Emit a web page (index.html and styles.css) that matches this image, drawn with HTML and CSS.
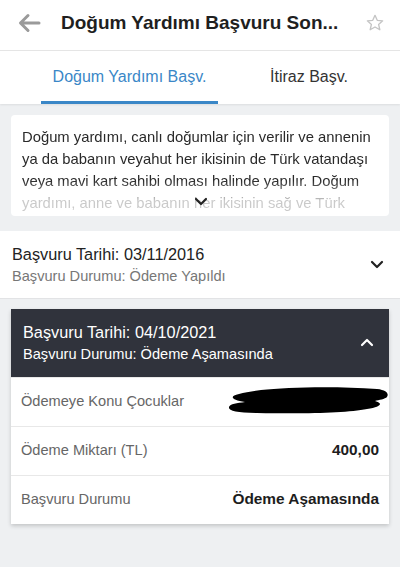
FILE: index.html
```html
<!DOCTYPE html>
<html lang="tr">
<head>
<meta charset="utf-8">
<link rel="stylesheet" href="styles.css">
</head>
<body>
<header class="topbar">
  <svg class="back" width="24" height="20" viewBox="0 0 24 20"><path d="M22 10H4M11 2.5L3.5 10L11 17.5" fill="none" stroke="#9a9a9a" stroke-width="3" stroke-linecap="round" stroke-linejoin="round"/></svg>
  <h1 class="title">Doğum Yardımı Başvuru Son...</h1>
  <svg class="star" width="20" height="20" viewBox="0 0 24 24"><path d="M12 2.8l2.7 6 6.5.6-4.9 4.3 1.5 6.4L12 16.8l-5.8 3.3 1.5-6.4-4.9-4.3 6.5-.6z" fill="none" stroke="#c4c4c4" stroke-width="1.6" stroke-linejoin="round"/></svg>
</header>
<nav class="tabs">
  <div class="tab active">Doğum Yardımı Başv.</div>
  <div class="tab">İtiraz Başv.</div>
</nav>
<main class="content">
  <section class="info">
    <p class="info-text">Doğum yardımı, canlı doğumlar için verilir ve annenin ya da babanın veyahut her ikisinin de Türk vatandaşı veya mavi kart sahibi olması halinde yapılır. Doğum yardımı, anne ve babanın her ikisinin sağ ve Türk</p>
    <svg class="more" width="14" height="9" viewBox="0 0 14 9"><path d="M2 2l5 5 5-5" fill="none" stroke="#222" stroke-width="2.2" stroke-linecap="round" stroke-linejoin="round"/></svg>
  </section>
  <section class="app">
    <div class="app-text">
      <div class="app-date">Başvuru Tarihi: 03/11/2016</div>
      <div class="app-status">Başvuru Durumu: Ödeme Yapıldı</div>
    </div>
    <svg width="14" height="9" viewBox="0 0 14 9"><path d="M2 2l5 5 5-5" fill="none" stroke="#222" stroke-width="2.2" stroke-linecap="round" stroke-linejoin="round"/></svg>
  </section>
  <section class="card">
    <div class="card-head">
      <div class="app-text">
        <div class="head-date">Başvuru Tarihi: 04/10/2021</div>
        <div class="head-status">Başvuru Durumu: Ödeme Aşamasında</div>
      </div>
      <svg width="14" height="9" viewBox="0 0 14 9"><path d="M2 7l5-5 5 5" fill="none" stroke="#fff" stroke-width="2.2" stroke-linecap="round" stroke-linejoin="round"/></svg>
    </div>
    <div class="row">
      <span class="label">Ödemeye Konu Çocuklar</span>
      <svg class="redact" width="162" height="30" viewBox="0 0 162 30"><path d="M34 4 C60 1 110 0 150 3 C160 4 162 8 160 11 C158 13 152 14 148 15 C156 17 155 21 140 23 C120 27 80 28 30 27 C10 27 1 25 2 21 C3 18 10 17 18 16 C4 14 2 10 12 8 C18 6 26 5 34 4Z" fill="#000"/></svg>
    </div>
    <div class="row">
      <span class="label">Ödeme Miktarı (TL)</span>
      <span class="value">400,00</span>
    </div>
    <div class="row">
      <span class="label">Başvuru Durumu</span>
      <span class="value">Ödeme Aşamasında</span>
    </div>
  </section>
</main>
</body>
</html>
```
FILE: styles.css
```css
* { box-sizing: border-box; }
html, body { margin: 0; padding: 0; }
body {
  width: 400px;
  height: 567px;
  overflow: hidden;
  background: #eef0f2;
  font-family: "Liberation Sans", Arial, sans-serif;
  color: #222;
}
.topbar {
  height: 51px;
  background: #fff;
  display: flex;
  align-items: center;
  padding: 0 15px 4px 17px;
  border-bottom: 1px solid #e6e6e6;
}
.back { flex: none; }
.title {
  flex: 1;
  margin: 0 0 0 20px;
  font-size: 19px;
  font-weight: bold;
  color: #1f1f1f;
  white-space: nowrap;
}
.star { flex: none; }
.tabs {
  height: 53px;
  background: #fff;
  display: flex;
  padding: 0 0 0 41px;
  box-shadow: 0 1px 2px rgba(0,0,0,0.08);
}
.tab {
  font-size: 16px;
  color: #333;
  display: flex;
  align-items: center;
  justify-content: center;
  padding-top: 1px;
}
.tab.active {
  width: 177px;
  color: #3a87c7;
  border-bottom: 3px solid #3a87c7;
}
.tab:not(.active) { flex: 1; padding-bottom: 3px; }
.content { padding-top: 11px; }
.info {
  margin: 0 11px;
  background: #fff;
  border-radius: 4px;
  height: 101px;
  padding: 11px 10px 0 11px;
  position: relative;
  overflow: hidden;
}
.info-text {
  margin: 0;
  font-size: 14.8px;
  line-height: 22px;
  color: #2a2a2a;
  -webkit-mask-image: linear-gradient(to bottom, #000 62%, rgba(0,0,0,0.25) 85%);
  mask-image: linear-gradient(to bottom, #000 62%, rgba(0,0,0,0.25) 85%);
}
.more {
  position: absolute;
  left: 183px;
  top: 82px;
}
.app {
  margin-top: 15px;
  background: #fff;
  height: 68px;
  display: flex;
  align-items: center;
  justify-content: space-between;
  padding: 0 16px 0 12px;
  border-bottom: 1px solid #e2e3e5;
}
.app-date { font-size: 16.3px; color: #222; }
.app-status { font-size: 14.6px; color: #777; margin-top: 4px; }
.card {
  margin: 10px 11px 0;
  background: #fff;
  box-shadow: 0 2px 4px rgba(0,0,0,0.18);
}
.card-head {
  height: 68px;
  background: #30333c;
  display: flex;
  align-items: center;
  justify-content: space-between;
  padding: 0 15px 2px 12px;
  color: #fff;
}
.head-date { font-size: 16.3px; }
.head-status { font-size: 14.6px; margin-top: 4px; }
.row {
  height: 49px;
  display: flex;
  align-items: center;
  justify-content: space-between;
  padding: 0 10px 2px 10px;
  border-top: 1px solid #e8e8e8;
}
.row:first-of-type { border-top: none; }
.label { font-size: 14.6px; color: #666; }
.value { font-size: 15.4px; font-weight: bold; color: #1d1d1d; }
.redact { margin-right: -10px; }
```
